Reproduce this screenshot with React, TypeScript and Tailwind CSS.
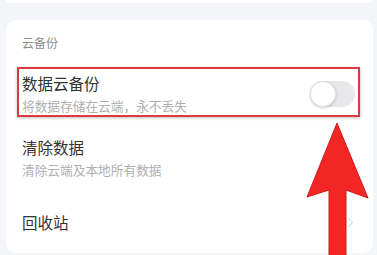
import { ChevronRight } from "lucide-react";

const font = { fontFamily: '"Noto Sans CJK SC", "Noto Sans", sans-serif' };

function Toggle() {
  return (
    <div className="relative w-[45px] h-[26px] rounded-full bg-[#e8e8ea]">
      <div className="absolute left-0 top-0 w-[26px] h-[26px] rounded-full bg-white border border-[#e2e2e2] shadow-[0_1px_3px_rgba(0,0,0,0.18)]" />
    </div>
  );
}

export default function App() {
  return (
    <div className="relative w-[377px] h-[255px] overflow-hidden bg-[#f4f5f9]" style={font}>
      {/* previous card, scrolled off */}
      <div className="h-[3px] ml-[6px] mr-[4px] bg-white rounded-b-lg" />

      <div className="mt-[17px] ml-[6px] mr-[4px] h-[233px] bg-white rounded-[10px] pl-[16px] pr-[18px] pt-[15px]">
        <p className="text-[12px] leading-[16px] text-[#8c8c8c]">云备份</p>

        <div className="mt-[22px] flex items-center justify-between">
          <div>
            <p className="text-[15.5px] leading-[20px] text-[#333]">数据云备份</p>
            <p className="mt-[4px] text-[12.7px] leading-[18px] text-[#b0b0b0]">将数据存储在云端，永不丢失</p>
          </div>
          <Toggle />
        </div>

        <div className="mt-[22px]">
          <p className="text-[15.5px] leading-[20px] text-[#333]">清除数据</p>
          <p className="mt-[4px] text-[12.7px] leading-[18px] text-[#b0b0b0]">清除云端及本地所有数据</p>
        </div>

        <div className="mt-[33px] flex items-center justify-between">
          <p className="text-[15.5px] leading-[20px] text-[#333]">回收站</p>
          <ChevronRight className="w-[17px] h-[17px] text-[#c4c4c4] -mr-[4px]" strokeWidth={1.4} />
        </div>
      </div>

      {/* annotation: highlight box */}
      <div className="absolute left-[17px] top-[67px] w-[343px] h-[50px] border-2 border-[#dc3a40] shadow-[0_1px_3px_rgba(0,0,0,0.25)]" />

      {/* annotation: arrow */}
      <svg className="absolute left-0 top-0" width="377" height="255" viewBox="0 0 377 255">
        <polygon
          points="337,123 368,198 346,190 346,260 329,260 329,190 307,197"
          fill="#f42525"
          stroke="#c91c1c"
          strokeWidth="1"
          strokeLinejoin="round"
        />
      </svg>
    </div>
  );
}
